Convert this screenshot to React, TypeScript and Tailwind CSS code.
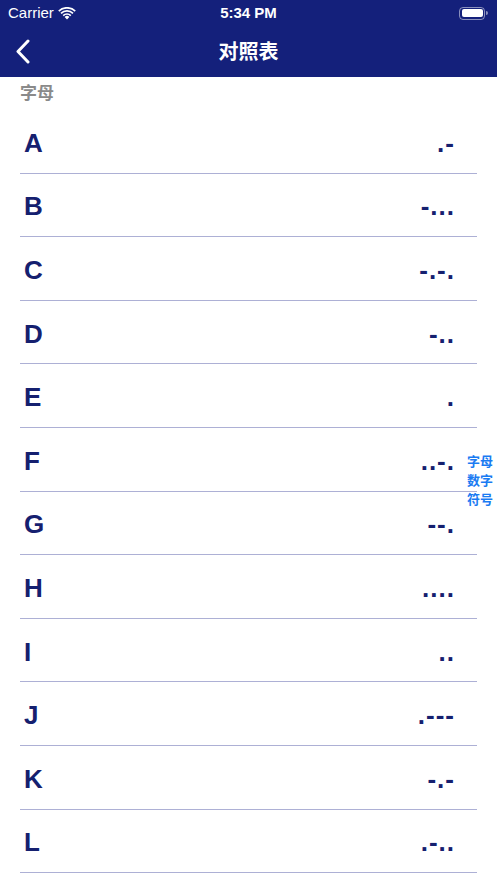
import React from 'react';

const rows: { letter: string; code: string }[] = [
  { letter: 'A', code: '.-' },
  { letter: 'B', code: '-...' },
  { letter: 'C', code: '-.-.' },
  { letter: 'D', code: '-..' },
  { letter: 'E', code: '.' },
  { letter: 'F', code: '..-.' },
  { letter: 'G', code: '--.' },
  { letter: 'H', code: '....' },
  { letter: 'I', code: '..' },
  { letter: 'J', code: '.---' },
  { letter: 'K', code: '-.-' },
  { letter: 'L', code: '.-..' },
];

const font = { fontFamily: '"Liberation Sans", "Noto Sans CJK SC", sans-serif' };

const App: React.FC = () => {
  return (
    <div className="relative w-[497px] h-[883px] overflow-hidden bg-white" style={font}>
      {/* status bar + nav */}
      <div className="bg-[#14207b] text-white">
        <div className="h-[26px] flex items-center justify-between px-2">
          <div className="flex items-center gap-1 w-[120px]">
            <span className="text-[15px]">Carrier</span>
            <svg width="18" height="13" viewBox="0 0 18 13" fill="white">
              <path d="M9 12.5 L6.6 10 A3.4 3.4 0 0 1 11.4 10 Z" />
              <path d="M4.6 8 A6.2 6.2 0 0 1 13.4 8 L12.2 9.2 A4.5 4.5 0 0 0 5.8 9.2 Z" />
              <path d="M2.4 5.8 A9.3 9.3 0 0 1 15.6 5.8 L14.4 7 A7.6 7.6 0 0 0 3.6 7 Z" />
              <path d="M0.2 3.6 A12.4 12.4 0 0 1 17.8 3.6 L16.6 4.8 A10.7 10.7 0 0 0 1.4 4.8 Z" />
            </svg>
          </div>
          <span className="text-[15px] font-bold">5:34 PM</span>
          <div className="w-[120px] flex justify-end pr-[1px]">
            <div className="flex items-center">
              <div className="w-[26px] h-[13px] rounded-[4px] border border-white/50 p-[1.5px]">
                <div className="w-full h-full rounded-[2px] bg-white" />
              </div>
              <div className="w-[1.5px] h-[4px] bg-white/50 rounded-r-sm ml-[1px]" />
            </div>
          </div>
        </div>
        <div className="h-[51px] relative flex items-center justify-center">
          <svg className="absolute left-[15px] top-[13px]" width="16" height="25" viewBox="0 0 16 25" fill="none" stroke="white" strokeWidth="3" strokeLinecap="round" strokeLinejoin="round">
            <path d="M13 2 L3 12.5 L13 23" />
          </svg>
          <span className="text-[20px] font-semibold">对照表</span>
        </div>
      </div>

      {/* section header */}
      <div className="h-[33px] flex items-center pl-[20px]">
        <span className="text-[17px] font-semibold text-[#8a8a8a]">字母</span>
      </div>

      {/* rows */}
      <div className="mx-[20px]">
        {rows.map((r) => (
          <div
            key={r.letter}
            className="h-[63.6px] box-border border-b border-[#adb0d5] flex items-center justify-between pt-[4px] pl-[4px] pr-[22px]"
          >
            <span className="text-[26px] font-bold text-[#15206f]">{r.letter}</span>
            <span className="text-[26px] font-bold text-[#15206f] tracking-[1px]">{r.code}</span>
          </div>
        ))}
      </div>

      {/* section index */}
      <div className="absolute left-[467px] top-[452px] flex flex-col text-[13px] leading-[19px] text-[#1a7bf2] font-semibold">
        <span>字母</span>
        <span>数字</span>
        <span>符号</span>
      </div>
    </div>
  );
};

export default App;
